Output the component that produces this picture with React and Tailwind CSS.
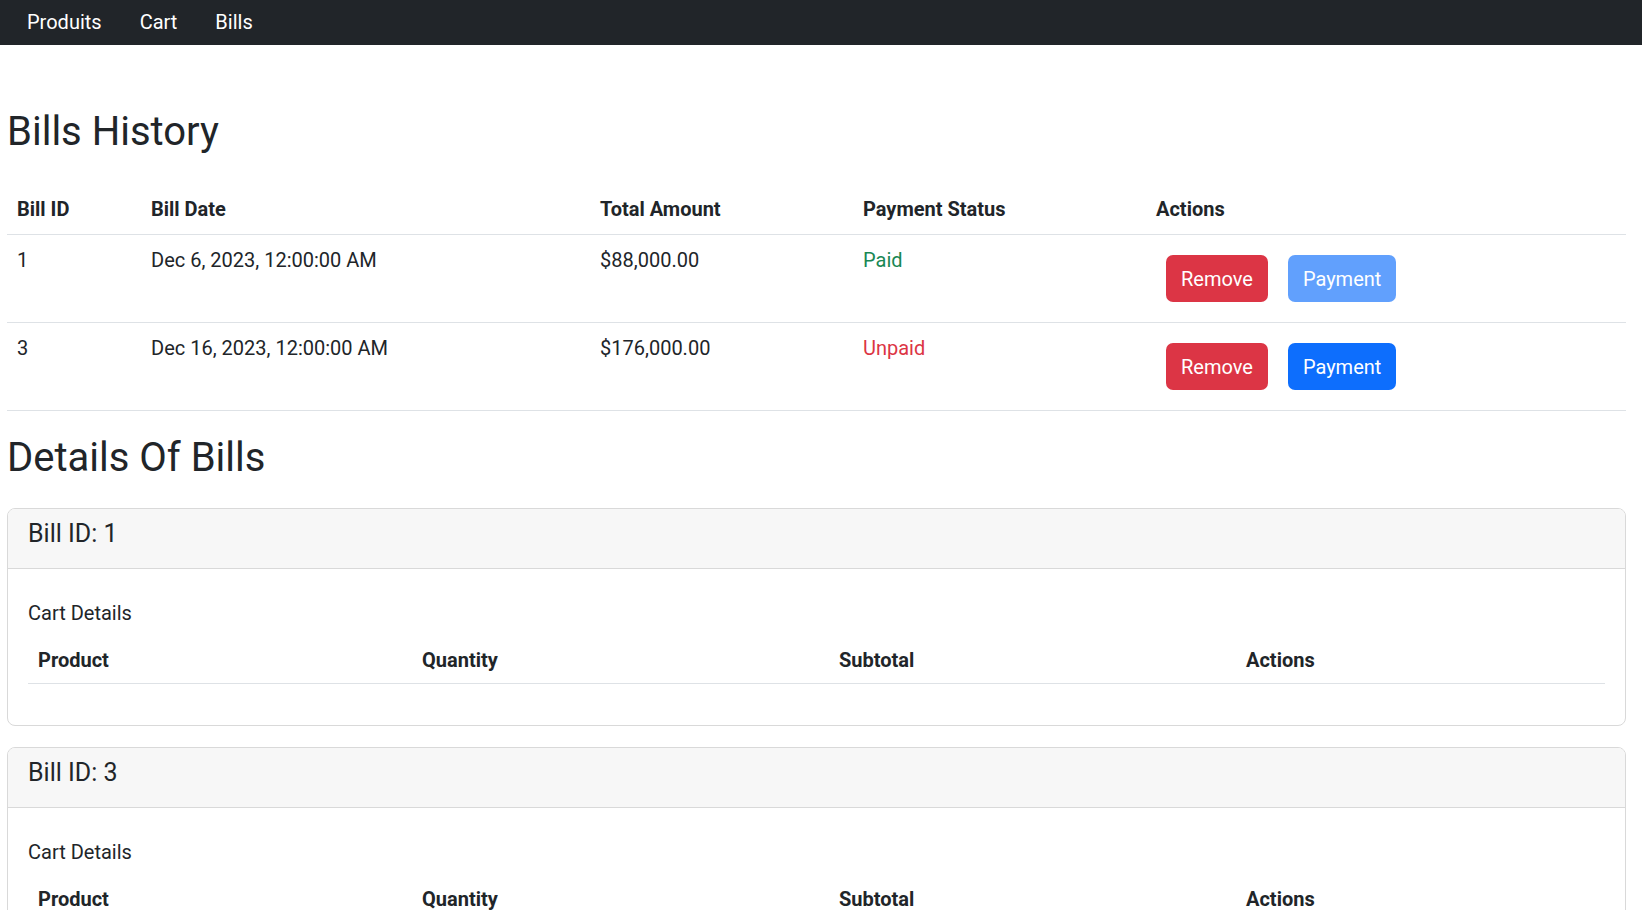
const BILLS = [
  { id: 1, date: "Dec 6, 2023, 12:00:00 AM", total: "$88,000.00", paid: true },
  { id: 3, date: "Dec 16, 2023, 12:00:00 AM", total: "$176,000.00", paid: false },
];

const NavBar = () => (
  <nav className="flex h-[45px] items-center gap-[38px] bg-[#212529] pb-[2px] pl-[27px] text-[20px] leading-[30px] text-white">
    <a href="#">Produits</a>
    <a href="#">Cart</a>
    <a href="#">Bills</a>
  </nav>
);

const BillCard = ({ id }) => (
  <div className="mb-[21px] overflow-hidden rounded-[8px] border border-[#d9d9d9]">
    <div className="border-b border-[#d9d9d9] bg-[#f7f7f7] px-[20px] pb-[19px] pt-[10px]">
      <h4 className="text-[25px] leading-[30px]">Bill ID: {id}</h4>
    </div>
    <div className="px-[20px] pb-[20px] pt-[32px]">
      <h6 className="mb-[8px] text-[20px] font-normal leading-[24px]">Cart Details</h6>
      <table className="mb-[21px] w-full table-fixed text-left text-[20px] leading-[30px]">
        <thead>
          <tr className="border-b border-[#dee2e6]">
            <th className="w-[384px] px-[10px] pb-[8px] pt-[12px] font-bold">Product</th>
            <th className="w-[417px] px-[10px] pb-[8px] pt-[12px] font-bold">Quantity</th>
            <th className="w-[407px] px-[10px] pb-[8px] pt-[12px] font-bold">Subtotal</th>
            <th className="px-[10px] pb-[8px] pt-[12px] font-bold">Actions</th>
          </tr>
        </thead>
        <tbody />
      </table>
    </div>
  </div>
);

export default function App() {
  return (
    <div className="min-h-screen bg-white font-['Segoe_UI',Roboto,'Liberation_Sans',sans-serif] text-[#212529]">
      <NavBar />

      <main className="pl-[7px] pr-[16px]">
        <h1 className="mb-[27px] mt-[62px] text-[40px] font-normal leading-[50px]">Bills History</h1>

        <table className="w-full table-fixed text-left text-[20px] leading-[30px]">
          <thead>
            <tr className="border-b border-[#dee2e6]">
              <th className="w-[134px] px-[10px] py-[10px] font-bold">Bill ID</th>
              <th className="w-[449px] px-[10px] py-[10px] font-bold">Bill Date</th>
              <th className="w-[263px] px-[10px] py-[10px] font-bold">Total Amount</th>
              <th className="w-[293px] px-[10px] py-[10px] font-bold">Payment Status</th>
              <th className="px-[10px] py-[10px] font-bold">Actions</th>
            </tr>
          </thead>
          <tbody>
            {BILLS.map((bill) => (
              <tr key={bill.id} className="border-b border-[#dee2e6] align-top">
                <td className="px-[10px] py-[10px]">{bill.id}</td>
                <td className="px-[10px] py-[10px]">{bill.date}</td>
                <td className="px-[10px] py-[10px]">{bill.total}</td>
                <td className={`px-[10px] py-[10px] ${bill.paid ? "text-[#198754]" : "text-[#dc3545]"}`}>
                  {bill.paid ? "Paid" : "Unpaid"}
                </td>
                <td className="px-[10px] py-[10px]">
                  <div className="flex">
                    <button
                      type="button"
                      className="m-[10px] h-[47px] rounded-[7px] bg-[#dc3545] px-[15px] text-white"
                    >
                      Remove
                    </button>
                    <button
                      type="button"
                      disabled={bill.paid}
                      className={`m-[10px] h-[47px] rounded-[7px] bg-[#0d6efd] px-[15px] text-white ${
                        bill.paid ? "opacity-65" : ""
                      }`}
                    >
                      Payment
                    </button>
                  </div>
                </td>
              </tr>
            ))}
          </tbody>
        </table>

        <h2 className="mb-[25px] mt-[22px] text-[40px] font-normal leading-[50px]">Details Of Bills</h2>

        {BILLS.map((bill) => (
          <BillCard key={bill.id} id={bill.id} />
        ))}
      </main>
    </div>
  );
}
